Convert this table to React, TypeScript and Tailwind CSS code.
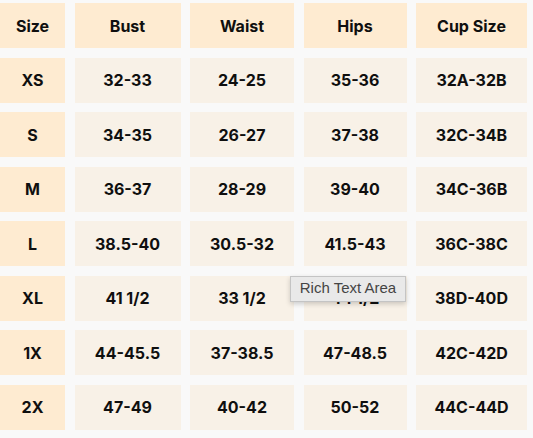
const headers = ["Size", "Bust", "Waist", "Hips", "Cup Size"]

const rows = [
  ["XS", "32-33", "24-25", "35-36", "32A-32B"],
  ["S", "34-35", "26-27", "37-38", "32C-34B"],
  ["M", "36-37", "28-29", "39-40", "34C-36B"],
  ["L", "38.5-40", "30.5-32", "41.5-43", "36C-38C"],
  ["XL", "41 1/2", "33 1/2", "44 1/2", "38D-40D"],
  ["1X", "44-45.5", "37-38.5", "47-48.5", "42C-42D"],
  ["2X", "47-49", "40-42", "50-52", "44C-44D"],
]

export default function App() {
  return (
    <div className="relative min-h-screen w-[533px] h-[438px] overflow-hidden bg-[#f9f9f9] pt-[3px] font-['Inter',sans-serif]">
      <div className="grid grid-cols-[65px_106px_104px_103px_111px] auto-rows-[45px] gap-x-[9.5px] gap-y-[9.57px] text-[16px] font-bold text-[#0f0f0f]">
        {headers.map((h) => (
          <div key={h} className="flex items-center justify-center bg-[#feebd1]">
            {h}
          </div>
        ))}
        {rows.map((row) =>
          row.map((cell, i) => (
            <div
              key={row[0] + i}
              className={`flex items-center justify-center ${i === 0 ? "bg-[#feebd1]" : "bg-[#f8f1e7]"}`}
            >
              {cell}
            </div>
          ))
        )}
      </div>

      {/* browser tooltip over the Hips cell */}
      <div className="absolute left-[290px] top-[276px] flex h-[26px] w-[116px] items-center justify-center border border-[#c4c4c4] bg-[#e9e9e9] pb-[1px] font-['Liberation_Sans',sans-serif] text-[15px] text-[#444] shadow-[0_2px_5px_rgba(0,0,0,0.18)]">
        Rich Text Area
      </div>
    </div>
  )
}
